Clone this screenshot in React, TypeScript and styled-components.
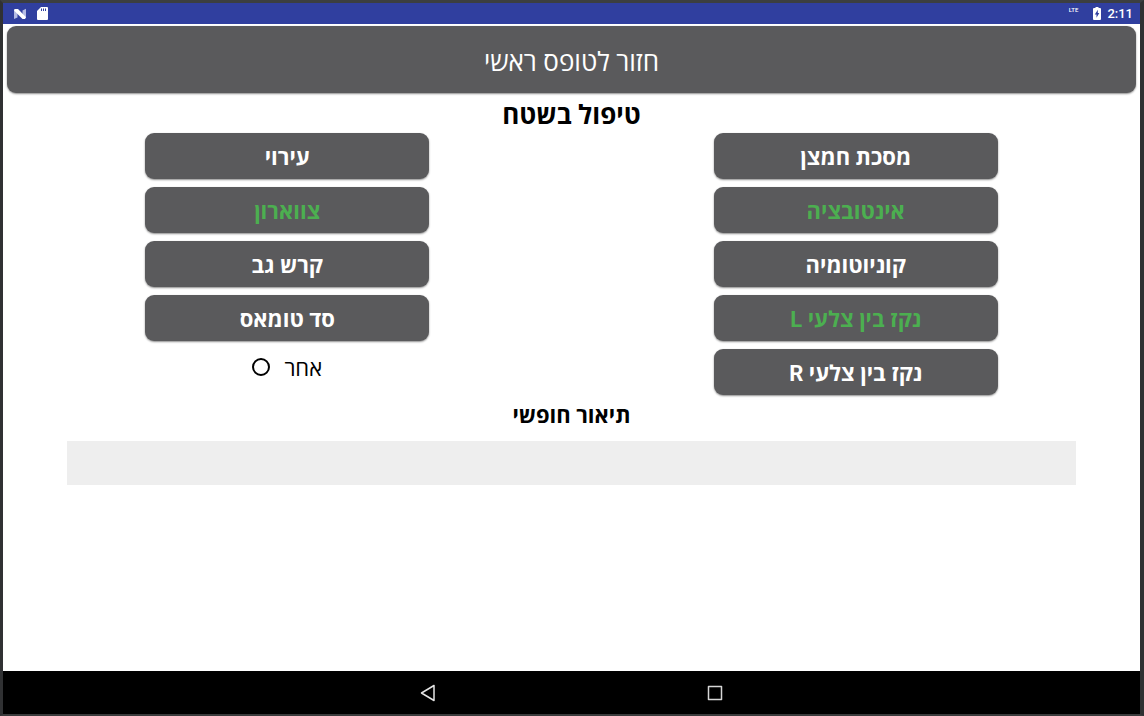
import React, { useState } from "react";
import styled, { createGlobalStyle } from "styled-components";

const GlobalStyle = createGlobalStyle`
  *, *::before, *::after { box-sizing: border-box; }
  body { margin: 0; background: #333436; }
  button, input { font: inherit; }
`;

const Device = styled.div`
  min-height: 100vh;
  display: flex;
  flex-direction: column;
  background: #fff;
  color: #000;
  border-style: solid;
  border-color: #3c3f41 #2f3032 #3a3b3c #303133;
  border-width: 3px 4px 2px 3px;
  font-family: Roboto, "Open Sans", sans-serif;
`;

const StatusBar = styled.header`
  display: flex;
  align-items: center;
  height: 21px;
  padding: 0 7px 0 10px;
  background: #303f9f;
  color: #fff;
`;

const StatusIcons = styled.div`
  display: flex;
  align-items: center;
  gap: 10px;
  flex: 1;
`;

const Network = styled.span`
  align-self: flex-start;
  padding-top: 3px;
  margin-right: 15px;
  font: 500 6px/8px Roboto, sans-serif;
`;

const Clock = styled.time`
  margin-left: 6px;
  font: 500 13px/20px Roboto, sans-serif;
`;

const Form = styled.main`
  flex: 1;
  display: flex;
  flex-direction: column;
  padding: 2px 4px 0;
`;

const RaisedButton = styled.button`
  display: block;
  padding: 4px 8px 0;
  border: 0;
  border-radius: 9px;
  background: #5a5a5c;
  color: #fff;
  box-shadow: 0 1px 2px rgba(0, 0, 0, 0.45);
  cursor: pointer;
`;

const BackToForm = styled(RaisedButton)`
  width: 100%;
  height: 67px;
  font-size: 26px;
  line-height: 36px;
`;

const Title = styled.h1`
  margin: 4px 0 0;
  font-size: 26px;
  line-height: 36px;
  font-weight: 700;
  text-align: center;
`;

const Columns = styled.div`
  display: grid;
  grid-template-columns: 1fr 1fr;
  margin: 0 -4px;
`;

const Column = styled.div`
  display: flex;
  flex-direction: column;
  align-items: center;
  gap: 8px;
`;

const Treatment = styled(RaisedButton)<{ $active: boolean }>`
  width: 50%;
  height: 46px;
  font-size: 22px;
  line-height: 32px;
  font-weight: 700;
  color: ${(p) => (p.$active ? "#4caf50" : "#fff")};
`;

const OtherOption = styled.label`
  display: flex;
  align-items: center;
  gap: 14px;
  font-size: 22px;
  line-height: 32px;
`;

const OtherText = styled.span`
  padding-top: 4px;
`;

const Radio = styled.input`
  appearance: none;
  width: 18px;
  height: 18px;
  margin: 0;
  border: 2px solid #000;
  border-radius: 50%;
  &:checked {
    background: radial-gradient(#000 0 4px, transparent 5px);
  }
`;

const NotesLabel = styled.label`
  margin: 5px 0 9px;
  font-size: 22px;
  line-height: 32px;
  font-weight: 700;
  text-align: center;
`;

const Notes = styled.input`
  height: 44px;
  margin: 0 60px;
  padding: 0 12px;
  border: 0;
  border-radius: 0;
  background: #eee;
  font-size: 20px;
`;

const NavBar = styled.nav`
  display: flex;
  justify-content: center;
  gap: 21%;
  height: 43px;
  background: #000;
`;

const NavButton = styled.button`
  display: grid;
  place-items: center;
  width: 48px;
  padding: 0;
  border: 0;
  background: none;
  cursor: pointer;
`;

const rightColumn = ["מסכת חמצן", "אינטובציה", "קוניוטומיה", "נקז בין צלעי L", "נקז בין צלעי R"];
const leftColumn = ["עירוי", "צווארון", "קרש גב", "סד טומאס"];

export default function App() {
  const [active, setActive] = useState<string[]>(["אינטובציה", "נקז בין צלעי L", "צווארון"]);

  const toggle = (name: string) =>
    setActive((list) => (list.includes(name) ? list.filter((n) => n !== name) : [...list, name]));

  const renderTreatment = (name: string) => (
    <Treatment
      key={name}
      type="button"
      $active={active.includes(name)}
      aria-pressed={active.includes(name)}
      onClick={() => toggle(name)}
    >
      {name}
    </Treatment>
  );

  return (
    <>
      <GlobalStyle />
      <Device>
        <StatusBar>
          <StatusIcons>
            <svg width="14" height="12" viewBox="0 0 14 12" aria-hidden="true">
              <path d="M1 2 4.500 4.500v5L1 11ZM13 .8v9.200L9.500 7.500V2.500Z" fill="#b4bbe3" />
              <path d="M1.500 1H5L13 9.200 12 11H9.500L1 2.500Z" fill="#fff" />
            </svg>
            <svg width="11" height="13" viewBox="0 0 11 13" aria-hidden="true">
              <path d="M4 0h6q1 0 1 1v11q0 1-1 1H1q-1 0-1-1V4Z" fill="#fff" />
              <path d="M4 1.500h1v2.500H4ZM6 1.500h1v2.500H6ZM8 1.500h1v2.500H8Z" fill="#303f9f" />
            </svg>
          </StatusIcons>
          <Network>LTE</Network>
          <svg width="8" height="13" viewBox="0 0 8 13" aria-hidden="true">
            <path d="M2.500 0h3v1H7q1 0 1 1v10q0 1-1 1H1q-1 0-1-1V2q0-1 1-1h1.500Z" fill="#fff" />
            <path d="M4.800 2.800 1.800 7.500h1.700v3.200L6.300 6H4.800Z" fill="#303f9f" />
          </svg>
          <Clock>2:11</Clock>
        </StatusBar>

        <Form dir="rtl" lang="he">
          <BackToForm type="button">חזור לטופס ראשי</BackToForm>
          <Title>טיפול בשטח</Title>
          <Columns>
            <Column>{rightColumn.map(renderTreatment)}</Column>
            <Column>
              {leftColumn.map(renderTreatment)}
              <OtherOption>
                <OtherText>אחר</OtherText>
                <Radio type="radio" name="other" />
              </OtherOption>
            </Column>
          </Columns>
          <NotesLabel htmlFor="notes">תיאור חופשי</NotesLabel>
          <Notes id="notes" type="text" />
        </Form>

        <NavBar>
          <NavButton type="button" aria-label="Back">
            <svg width="16" height="18" viewBox="0 0 16 18" fill="none" stroke="#e4e4e4" strokeWidth="1.500" strokeLinejoin="round">
              <path d="M14 1.500v15L1.500 9Z" />
            </svg>
          </NavButton>
          <NavButton type="button" aria-label="Recent apps">
            <svg width="16" height="16" viewBox="0 0 16 16" fill="none" stroke="#d6d6d6" strokeWidth="1.500" strokeLinejoin="round">
              <path d="M1.500 1.500h13v13h-13Z" />
            </svg>
          </NavButton>
        </NavBar>
      </Device>
    </>
  );
}
